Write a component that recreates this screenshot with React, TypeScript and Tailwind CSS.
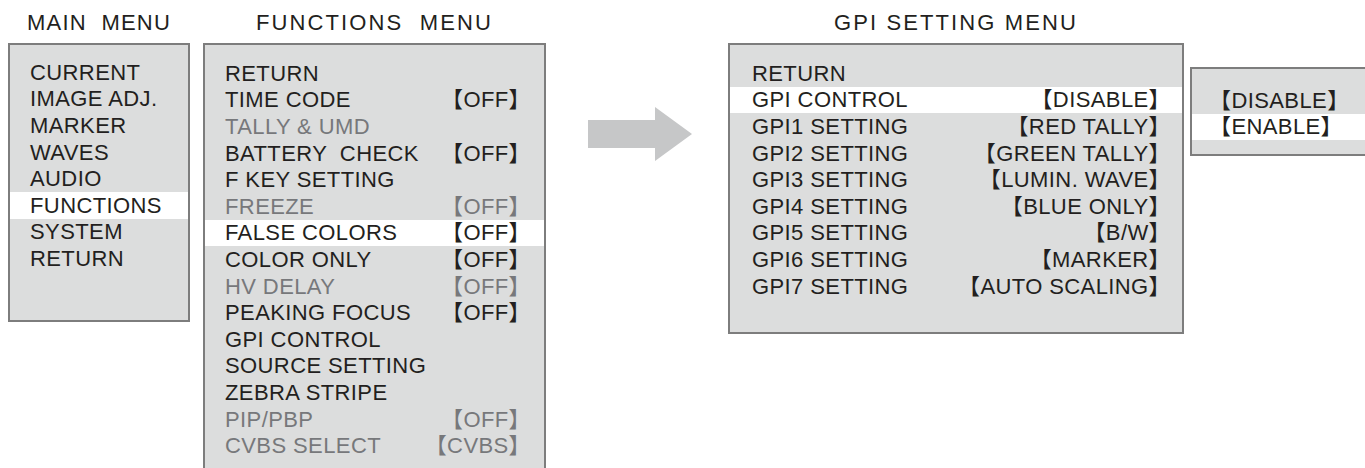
import React from 'react';

type Item = {
  label: string;
  value?: string;
  hl?: boolean;
  dim?: boolean;
};

const mainItems: Item[] = [
  { label: 'CURRENT' },
  { label: 'IMAGE ADJ.' },
  { label: 'MARKER' },
  { label: 'WAVES' },
  { label: 'AUDIO' },
  { label: 'FUNCTIONS', hl: true },
  { label: 'SYSTEM' },
  { label: 'RETURN' },
];

const functionItems: Item[] = [
  { label: 'RETURN' },
  { label: 'TIME CODE', value: '【OFF】' },
  { label: 'TALLY & UMD', dim: true },
  { label: 'BATTERY  CHECK', value: '【OFF】' },
  { label: 'F KEY SETTING' },
  { label: 'FREEZE', value: '【OFF】', dim: true },
  { label: 'FALSE COLORS', value: '【OFF】', hl: true },
  { label: 'COLOR ONLY', value: '【OFF】' },
  { label: 'HV DELAY', value: '【OFF】', dim: true },
  { label: 'PEAKING FOCUS', value: '【OFF】' },
  { label: 'GPI CONTROL' },
  { label: 'SOURCE SETTING' },
  { label: 'ZEBRA STRIPE' },
  { label: 'PIP/PBP', value: '【OFF】', dim: true },
  { label: 'CVBS SELECT', value: '【CVBS】', dim: true },
];

const gpiItems: Item[] = [
  { label: 'RETURN' },
  { label: 'GPI CONTROL', value: '【DISABLE】', hl: true },
  { label: 'GPI1 SETTING', value: '【RED TALLY】' },
  { label: 'GPI2 SETTING', value: '【GREEN TALLY】' },
  { label: 'GPI3 SETTING', value: '【LUMIN. WAVE】' },
  { label: 'GPI4 SETTING', value: '【BLUE ONLY】' },
  { label: 'GPI5 SETTING', value: '【B/W】' },
  { label: 'GPI6 SETTING', value: '【MARKER】' },
  { label: 'GPI7 SETTING', value: '【AUTO SCALING】' },
];

const popupItems: Item[] = [
  { label: '【DISABLE】' },
  { label: '【ENABLE】', hl: true },
];

const Row = ({ item, pad }: { item: Item; pad: string }) => (
  <div
    className={`flex h-[26.6px] items-center justify-between whitespace-pre ${pad} ${
      item.hl ? 'bg-white' : ''
    } ${item.dim ? 'text-[#77787b]' : 'text-[#231f20]'}`}
  >
    <span>{item.label}</span>
    {item.value && <span>{item.value}</span>}
  </div>
);

const Title = ({ text, track }: { text: string; track: string }) => (
  <div className={`flex h-[44px] items-center justify-center whitespace-pre text-[#231f20] ${track}`}>
    {text}
  </div>
);

const App: React.FC = () => {
  return (
    <div className="h-[468px] w-full overflow-hidden bg-white font-['Liberation_Sans','Noto_Sans_CJK_SC',sans-serif] text-[22px] tracking-[0.4px]">
      <div className="flex items-start pl-[8px]">
        {/* Main menu */}
        <div className="flex w-[182px] flex-col">
          <Title text="MAIN  MENU" track="tracking-[1.2px]" />
          <div className="-mt-px border-2 border-[#7d7d7d] bg-[#dcdddd] pt-[14px] pb-[48px]">
            {mainItems.map((it) => (
              <Row key={it.label} item={it} pad="pl-[20px]" />
            ))}
          </div>
        </div>

        {/* Functions menu */}
        <div className="ml-[13px] flex w-[343px] flex-col">
          <Title text="FUNCTIONS  MENU" track="tracking-[2.1px]" />
          <div className="-mt-px border-2 border-[#7d7d7d] bg-[#dcdddd] pt-[15px] pb-[30px]">
            {functionItems.map((it) => (
              <Row key={it.label} item={it} pad="pl-[20px] pr-[13px]" />
            ))}
          </div>
        </div>

        {/* Arrow */}
        <div className="ml-[42px] mt-[107px]">
          <svg width="104" height="54" viewBox="0 0 104 54">
            <polygon points="0,13 67,13 67,0 104,27 67,54 67,41 0,41" fill="#c6c7c8" />
          </svg>
        </div>

        {/* GPI setting menu */}
        <div className="ml-[36px] flex w-[456px] flex-col">
          <Title text="GPI SETTING MENU" track="tracking-[2.1px]" />
          <div className="-mt-px border-2 border-[#7d7d7d] bg-[#dcdddd] pt-[15px] pb-[33px]">
            {gpiItems.map((it) => (
              <Row key={it.label} item={it} pad="pl-[22px] pr-[11px]" />
            ))}
          </div>
        </div>

        {/* Option popup */}
        <div className="ml-[6px] mt-[67px] flex-1 border-y-2 border-l-2 border-[#7d7d7d] bg-[#dcdddd] pt-[18px] pb-[14px]">
          {popupItems.map((it) => (
            <Row key={it.label} item={it} pad="pl-[17px]" />
          ))}
        </div>
      </div>
    </div>
  );
};

export default App;
